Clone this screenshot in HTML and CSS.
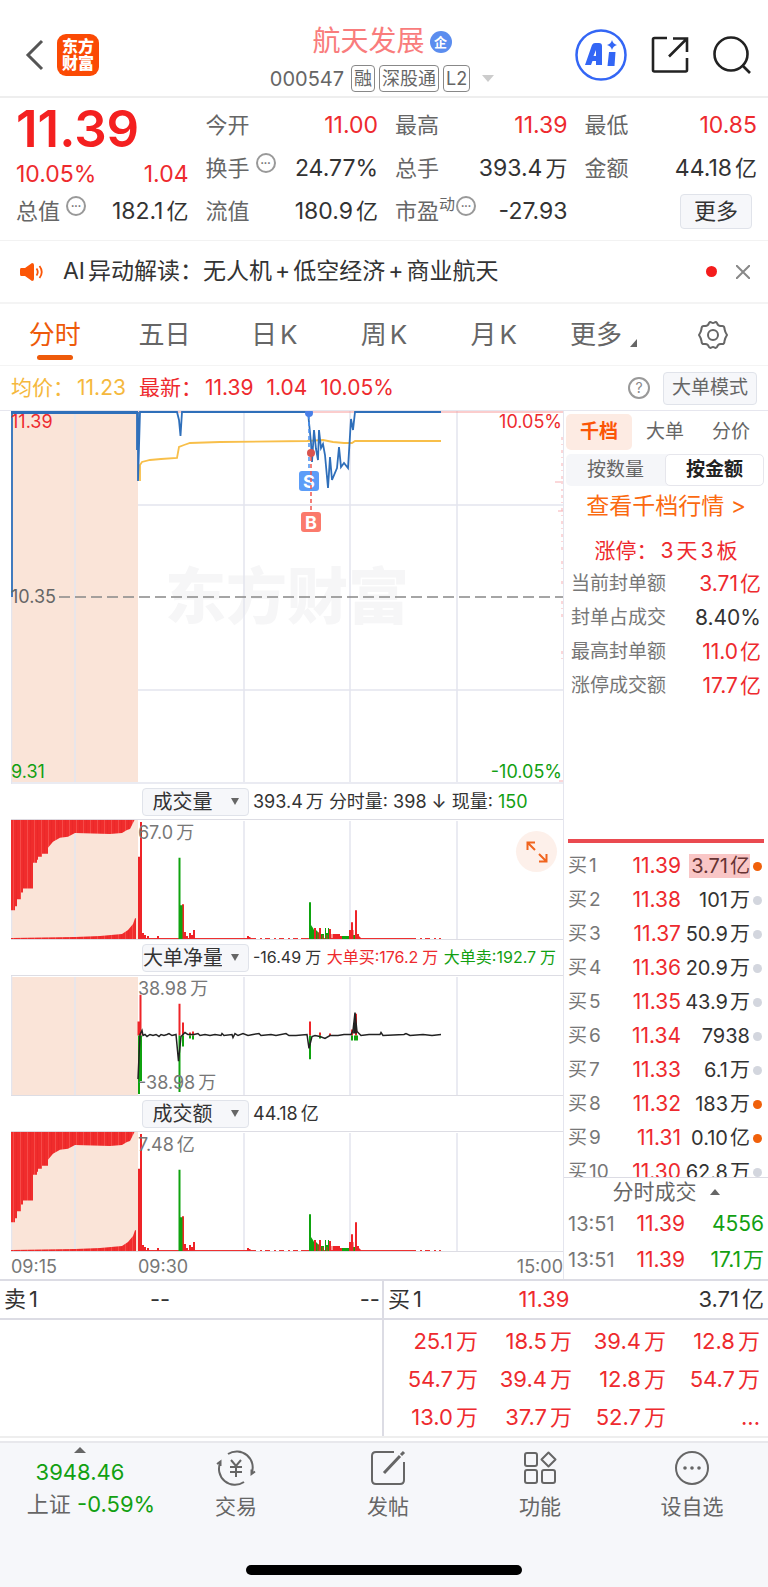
FILE: index.html
```html
<!DOCTYPE html>
<html lang="zh-CN">
<head>
    <meta charset="UTF-8">
    <meta name="viewport" content="width=device-width, initial-scale=1.0">
    <title>航天发展 000547</title>
    <link rel="stylesheet" href="styles.css">
</head>
<body>
    <header class="topbar">
        <div class="topbar-left">
            <button class="icon-btn" aria-label="返回">
                <svg width="20" height="32" viewBox="0 0 20 32"><path d="M17 2 L3 16 L17 30" fill="none" stroke="#555" stroke-width="3"/></svg>
            </button>
            <div class="logo"><span>东方</span><span>财富</span></div>
        </div>
        <div class="topbar-title">
            <h1>航天发展<span class="corp">企</span></h1>
            <div class="code-row">
                <span class="code">000547</span>
                <span class="tag">融</span>
                <span class="tag">深股通</span>
                <span class="tag">L2</span>
                <svg class="code-arrow" width="12" height="7" viewBox="0 0 12 7"><path d="M0 0H12L6 7Z" fill="#ccc"/></svg>
            </div>
        </div>
        <div class="topbar-right">
            <button class="icon-btn" aria-label="Ai">
                <svg width="52" height="52" viewBox="0 0 52 52">
                    <circle cx="26" cy="26" r="24.5" fill="none" stroke="#3366f5" stroke-width="2.5"/>
                    <path d="M10 36L17 16Q18 14 20 14H24Q27 14 27 17V36H21V32H17.500L16 36ZM18.500 27H21V21Z" fill="#3366f5" fill-rule="evenodd"/>
                    <path d="M34 23H40.500L39.500 37H32.500ZM37 11Q38 15 42 16Q38 17 37 21Q36 17 32 16Q36 15 37 11Z" fill="#3366f5"/>
                </svg>
            </button>
            <button class="icon-btn" aria-label="分享">
                <svg width="38" height="38" viewBox="0 0 38 38" fill="none" stroke="#222" stroke-width="2.6">
                    <path d="M16 2H3.500Q2 2 2 3.500V34Q2 35.500 3.500 35.500H34.500Q36 35.500 36 34V22"/>
                    <path d="M22 2.500H36V16M36 2.500L18 20.500"/>
                </svg>
            </button>
            <button class="icon-btn" aria-label="搜索">
                <svg width="38" height="38" viewBox="0 0 38 38" fill="none" stroke="#222" stroke-width="2.6"><circle cx="18" cy="18" r="16.500"/><path d="M29 29L37 37"/></svg>
            </button>
        </div>
    </header>

    <section class="quote">
        <div class="price-cell">
            <strong class="price">11.39</strong>
            <div class="cell up"><b>10.05%</b><b>1.04</b></div>
        </div>
        <div class="cell"><span>今开</span><b class="up">11.00</b></div>
        <div class="cell"><span>最高</span><b class="up">11.39</b></div>
        <div class="cell"><span>最低</span><b class="up">10.85</b></div>
        <div class="cell"><span>换手<i class="dots">•••</i></span><b>24.77%</b></div>
        <div class="cell"><span>总手</span><b>393.4<em>万</em></b></div>
        <div class="cell"><span>金额</span><b>44.18<em>亿</em></b></div>
        <div class="cell"><span>总值<i class="dots">•••</i></span><b>182.1<em>亿</em></b></div>
        <div class="cell"><span>流值</span><b>180.9<em>亿</em></b></div>
        <div class="cell"><span>市盈<sup>动</sup><i class="dots near">•••</i></span><b>-27.93</b></div>
        <div class="cell end"><button class="more-btn">更多</button></div>
    </section>

    <section class="notice">
        <svg width="24" height="20" viewBox="0 0 24 20">
            <path d="M1 6Q0 6 0 8V12Q0 14 1 14H5L12 19Q14 19 14 17V3Q14 1 12 1L5 6Z" fill="#fb5607"/>
            <path d="M16.500 6.500Q19 10 16.500 13.500M19.500 4Q24 10 19.500 16" fill="none" stroke="#fb5607" stroke-width="1.8"/>
        </svg>
        <p>AI<em>异动解读：无人机</em><em>+</em><em>低空经济</em><em>+</em><em>商业航天</em></p>
        <span class="red-dot"></span>
        <button class="icon-btn" aria-label="关闭">
            <svg width="14" height="14" viewBox="0 0 14 14"><path d="M0 0L14 14M14 0L0 14" stroke="#888" stroke-width="2"/></svg>
        </button>
    </section>

    <nav class="tabs">
        <a href="#" class="active">分时</a>
        <a href="#">五日</a>
        <a href="#">日<em>K</em></a>
        <a href="#">周<em>K</em></a>
        <a href="#">月<em>K</em></a>
        <a href="#">更多<svg class="corner" width="7" height="8" viewBox="0 0 7 8"><path d="M7 0V8H0Z" fill="#666"/></svg></a>
        <button class="icon-btn" aria-label="设置">
            <svg width="30" height="30" viewBox="0 0 30 30" fill="none" stroke="#666" stroke-width="2">
                <path d="M11 3Q12 1.500 13.500 2.500Q15 3.500 16.500 2.500Q18 1.500 19 3Q20 6.500 23.500 6Q26.500 5.500 26.500 9Q27 12 29 15Q27 18 26.500 21Q26.500 24.500 23.500 24Q20 23.500 19 27Q18 28.500 16.500 27.500Q15 26.500 13.500 27.500Q12 28.500 11 27Q10 23.500 6.500 24Q3.500 24.500 3.500 21Q3 18 1 15Q3 12 3.500 9Q3.500 5.500 6.500 6Q10 6.500 11 3Z"/>
                <circle cx="15" cy="15" r="5"/>
            </svg>
        </button>
    </nav>

    <div class="legend">
        <span class="avg">均价：<em>11.23</em></span>
        <span class="up">最新：<em>11.39</em></span>
        <span class="up">1.04</span>
        <span class="up">10.05%</span>
        <button class="help" aria-label="帮助">?</button>
        <button class="mode-btn">大单模式</button>
    </div>

    <main class="board">
        <div class="charts">
            <div class="chart chart-price">
                <div class="watermark">东方财富</div>
                <svg viewBox="0 0 552 373" preserveAspectRatio="none">
                    <rect x="0" y="1" width="127" height="370" fill="#fae4d8"/>
                    <path d="M.5 0V373M64 0V371M233 0V371M339 0V371M446 0V371" stroke="#e4e5ee" stroke-width="1.500" fill="none"/>
                    <path d="M127 94H552M127 279H552M0 372H552" stroke="#e4e5ee" stroke-width="1.500" fill="none"/>
                    <path d="M48 186H552" stroke="#888" stroke-width="1.500" stroke-dasharray="11 5"/>
                    <path d="M0 1H552" stroke="#f79a9a" stroke-width="1"/>
                    <path d="M551 26V80M551 84V140M551 150V160M551 170V176M551 190V210M551 240V250" stroke="#f7b0b4" stroke-dasharray="3 4 1 5"/>
                    <path d="M544 71H552M547 100H552M548 370H552" stroke="#f7b0b4"/>
                    <path d="M129 70L129 54L131 51L139 49L150 48L166 47L168 36L173 34L179 32L209 31L296 30L312 29L322 31L333 32L341 32L344 30H430" fill="none" stroke="#f8bf4a" stroke-width="1.800"/>
                    <path d="M0 1.500H127" stroke="#2f6fba" stroke-width="3"/>
                    <path d="M1 186V1M126 1V39" stroke="#2f6fba" stroke-width="1.800" fill="none"/>
                    <path d="M127 1V70L129 1H166L168 9L169.500 25L171 1H297L300 32L301 51L303 19L305 38L307 49L308 19L310 37L312 33L314 44L317 77L319 46L321 69L326 57L328 36L330 56L333 52L337 57L340 8L342 19L344 1H430" fill="none" stroke="#2f6fba" stroke-width="1.800"/>
                    <path d="M298 4V60" stroke="#4a90f0" stroke-width="1.500" stroke-dasharray="4 3"/>
                    <circle cx="298" cy="2" r="4" fill="#4a80e8"/>
                    <rect x="288" y="60" width="20" height="20" rx="3" fill="#5c9df8"/>
                    <text x="298" y="77" class="mark">S</text>
                    <path d="M300 46V101" stroke="#f0554e" stroke-width="1.500" stroke-dasharray="4 3"/>
                    <circle cx="300" cy="42" r="4" fill="#d9534f"/>
                    <rect x="290" y="101" width="20" height="20" rx="3" fill="#fb7a6c"/>
                    <text x="300" y="118" class="mark">B</text>
                </svg>
                <span class="tl up">11.39</span>
                <span class="tr up">10.05%</span>
                <span class="ml">10.35</span>
                <span class="bl down">9.31</span>
                <span class="br down">-10.05%</span>
            </div>

            <div class="sub-head">
                <div class="picker"><select aria-label="指标一"><option>成交量</option></select><i></i></div>
                <p>393.4<em>万</em> 分时量: 398 ↓ 现量: <b class="down">150</b></p>
            </div>
            <div class="chart chart-sub">
                <svg viewBox="0 0 552 121" preserveAspectRatio="none">
                    <defs>
                        <pattern id="stripe" width="7" height="10" patternUnits="userSpaceOnUse">
                            <rect width="7" height="10" fill="#f02c2c"/>
                            <rect x="2" width="1" height="10" fill="#f64a48"/>
                            <rect x="5" width="1" height="10" fill="#ea282a"/>
                        </pattern>
                        <g id="volume">
                            <rect x="0" y="0" width="127" height="121" fill="#fae4d8"/>
                            <path d="M.5 0V121M64 0V121M233 2V121M339 2V121M446 2V121" stroke="#e4e5ee" stroke-width="1.500" fill="none"/>
                            <path d="M0 0V92H4V88H6V81H10V74H12V70H22V44H26V41H27V38H31V35H37V29L42 23L49 19L57 18L64 14L99 15L111 14L116 11L119 10L122 4L124 0Z" fill="url(#stripe)"/>
                            <path d="M0 121V120L64 119L89 118L111 116L117 112L122 106L124 100H125V121Z" fill="url(#stripe)"/>
                            <path d="M127 120.500H240M290 120.500H400" stroke="#ee2f2f" stroke-width="1"/>
                            <path d="M240 120.500H290M400 120.500H430" stroke="#ee2f2f" stroke-width="1" stroke-dasharray="5 4 2 3"/>
                            <path d="M128 121V38M130 121V3M132 121V115M134 121V117M137 121V118M147 121V118M172 121V86M174 121V114M176 121V118M179 121V115M181 121V117M183 121V112M237 121V118M238.500 121V119M304 121V110M309 121V110M319 121V111M339 121V112M341 121V104M345 121V92M347 121V116" stroke="#ee2428" stroke-width="2" fill="none"/>
                            <path d="M322 121V116H329V118H331V121ZM346 121V116L350 120V121Z" fill="#ee2428"/>
                            <path d="M168.500 121V39M170.500 121V87M299 121V84" stroke="#0fa30f" stroke-width="2" fill="none"/>
                            <path d="M300 121V107L302 110L303 112V121ZM305 121V112L308 115V121ZM310 121V116H313V121ZM314 121V110H315V115H317V110H318V121ZM331 121V118H338V121ZM342 121V117H344V121Z" fill="#0fa30f"/>
                            <path d="M307 121V114M312 121V117M316 121V117M321 121V116M326 121V117M342 121V112" stroke="#ee2428" stroke-width="1"/>
                            <path d="M0 .5H552" stroke="#dddde4"/>
                        </g>
                    </defs>
                    <use href="#volume"/>
                </svg>
                <span class="in">67.0<em>万</em></span>
                <button class="expand" aria-label="展开">
                    <svg width="22" height="22" viewBox="0 0 22 22" fill="none" stroke="#f0641e" stroke-width="2"><path d="M1.500 9V1.500H9M1.500 1.500L9 9M20.500 13V20.500H13M20.500 20.500L13 13"/></svg>
                </button>
            </div>

            <div class="sub-head">
                <div class="picker"><select aria-label="指标二"><option>大单净量</option></select><i></i></div>
                <p class="small">-16.49<em>万</em> <span class="up">大单买:176.2<em>万</em></span> <span class="down">大单卖:192.7<em>万</em></span></p>
            </div>
            <div class="chart chart-sub">
                <svg viewBox="0 0 552 121" preserveAspectRatio="none">
                    <rect x="0" y="2" width="127" height="119" fill="#fae4d8"/>
                    <path d="M.5 0V121M64 2V121M233 2V121M339 2V121M446 2V121" stroke="#e4e5ee" stroke-width="1.500" fill="none"/>
                    <path d="M0 .5H552" stroke="#dddde4"/>
                    <path d="M127.500 61V47M129.500 61V20M168.500 61V29M172 61V48M179 61V58M182 61V57M299 61V47M309 61V58M319 61V59M341 61V55M345 61V39" stroke="#ee2428" stroke-width="2"/>
                    <path d="M128 61V120M130 61V107M168.500 61V118M172 61V72M179 61V64M182 61V65M299 61V85M309 61V64M341 61V66M344 61V66M346 61V66" stroke="#0fa30f" stroke-width="2"/>
                    <path d="M127 105L129 60L131 56L132 61L134 60L136 62L139 60L142 61L145 60L148 62L150 60L153 61L156 60L158 59L161 61L165 60L167.500 87L170 62L174 58L177 60L183 60L187 59L189 61L194 60L199 61L204 60L210 61L211 59L213 61L221 60L222 63L224 59L227 61L232 59L237 61L242 60L248 59L250 61L260 60L265 61L275 59L278 61L285 61L296 60L298 74L301 62L304 61L309 62L314 64L319 61L327 61L333 60L340 60L342 56L344 38L346 57L350 61L358 60L369 60L370 58L372 61L393 60L395 59L399 61L412 60L421 61L430 60" fill="none" stroke="#222" stroke-width="1.500"/>
                    <path d="M342 59L344 38L346 59Z" fill="#222"/>
                </svg>
                <span class="in">38.98<em>万</em></span>
                <span class="in low">-38.98<em>万</em></span>
            </div>

            <div class="sub-head">
                <div class="picker"><select aria-label="指标三"><option>成交额</option></select><i></i></div>
                <p>44.18<em>亿</em></p>
            </div>
            <div class="chart chart-sub">
                <svg viewBox="0 0 552 121" preserveAspectRatio="none"><use href="#volume"/></svg>
                <span class="in">7.48<em>亿</em></span>
            </div>
            <div class="axis"><span>09:15</span><span class="open">09:30</span><span>15:00</span></div>
        </div>

        <aside class="side">
            <div class="side-tabs">
                <button class="active">千档</button>
                <button>大单</button>
                <button>分价</button>
            </div>
            <div class="segment">
                <button>按数量</button>
                <button class="active">按金额</button>
            </div>
            <a href="#" class="depth-link">查看千档行情 &gt;</a>
            <h2 class="up">涨停：<em>3</em><em>天</em><em>3</em><em>板</em></h2>
            <table class="limit">
                <tr><th>当前封单额</th><td class="up">3.71<em>亿</em></td></tr>
                <tr><th>封单占成交</th><td>8.40%</td></tr>
                <tr><th>最高封单额</th><td class="up">11.0<em>亿</em></td></tr>
                <tr><th>涨停成交额</th><td class="up">17.7<em>亿</em></td></tr>
            </table>
            <div class="bids">
                <table>
                    <tr class="hot"><th>买<em>1</em></th><td class="up">11.39</td><td><mark>3.71<em>亿</em></mark></td><td><i></i></td></tr>
                    <tr><th>买<em>2</em></th><td class="up">11.38</td><td>101<em>万</em></td><td><i></i></td></tr>
                    <tr><th>买<em>3</em></th><td class="up">11.37</td><td>50.9<em>万</em></td><td><i></i></td></tr>
                    <tr><th>买<em>4</em></th><td class="up">11.36</td><td>20.9<em>万</em></td><td><i></i></td></tr>
                    <tr><th>买<em>5</em></th><td class="up">11.35</td><td>43.9<em>万</em></td><td><i></i></td></tr>
                    <tr><th>买<em>6</em></th><td class="up">11.34</td><td>7938</td><td><i></i></td></tr>
                    <tr><th>买<em>7</em></th><td class="up">11.33</td><td>6.1<em>万</em></td><td><i></i></td></tr>
                    <tr class="hot"><th>买<em>8</em></th><td class="up">11.32</td><td>183<em>万</em></td><td><i></i></td></tr>
                    <tr class="hot"><th>买<em>9</em></th><td class="up">11.31</td><td>0.10<em>亿</em></td><td><i></i></td></tr>
                    <tr><th>买<em>10</em></th><td class="up">11.30</td><td>62.8<em>万</em></td><td><i></i></td></tr>
                </table>
            </div>
            <button class="trades-head">分时成交<svg width="10" height="6" viewBox="0 0 10 6"><path d="M5 0L10 6H0Z" fill="#666"/></svg></button>
            <table class="trades">
                <tr><th>13:51</th><td class="up">11.39</td><td class="down">4556</td></tr>
                <tr><th>13:51</th><td class="up">11.39</td><td class="down">17.1<em>万</em></td></tr>
            </table>
        </aside>
    </main>

    <section class="queue">
        <div class="queue-half">
            <div class="queue-head"><span>卖<em>1</em></span><span>--</span><span>--</span></div>
        </div>
        <div class="queue-half">
            <div class="queue-head"><span>买<em>1</em></span><span class="up">11.39</span><span>3.71<em>亿</em></span></div>
            <div class="queue-grid up">
                <span>25.1<em>万</em></span><span>18.5<em>万</em></span><span>39.4<em>万</em></span><span>12.8<em>万</em></span>
                <span>54.7<em>万</em></span><span>39.4<em>万</em></span><span>12.8<em>万</em></span><span>54.7<em>万</em></span>
                <span>13.0<em>万</em></span><span>37.7<em>万</em></span><span>52.7<em>万</em></span><span>...</span>
            </div>
        </div>
    </section>

    <footer>
        <nav class="bottom-nav">
            <a href="#" class="index">
                <svg width="12" height="6" viewBox="0 0 12 6"><path d="M6 0L12 6H0Z" fill="#666"/></svg>
                <span>3948.46</span>
                <span class="index-change"><b>上证</b> -0.59%</span>
            </a>
            <a href="#">
                <svg width="40" height="36" viewBox="0 0 40 36" fill="none" stroke="#666" stroke-width="2">
                    <path d="M12 4A16 16 0 0 1 35.500 23.500M28 32A16 16 0 0 1 4.500 12M1 14L4.500 11.500V16M39 21.500L35.500 24V19.500"/>
                    <path d="M15 10L20 16L25 10M20 16V27M14 17H26M14 22H26"/>
                </svg>
                交易
            </a>
            <a href="#">
                <svg width="36" height="36" viewBox="0 0 36 36" fill="none" stroke="#666" stroke-width="2">
                    <path d="M24 2H6Q2 2 2 6V30Q2 34 6 34H30Q34 34 34 30V12"/>
                    <path d="M14 23L30 6M31 5L34 2" stroke-width="3"/>
                </svg>
                发帖
            </a>
            <a href="#">
                <svg width="36" height="36" viewBox="0 0 36 36" fill="none" stroke="#666" stroke-width="2">
                    <rect x="3" y="3" width="12" height="13" rx="2"/><rect x="3" y="20" width="12" height="13" rx="2"/><rect x="20" y="20" width="13" height="13" rx="2"/><path d="M26.500 2.500L33.500 9.500L26.500 16.500L19.500 9.500Z" stroke-linejoin="round"/>
                </svg>
                功能
            </a>
            <a href="#">
                <svg width="36" height="36" viewBox="0 0 36 36" fill="none" stroke="#666" stroke-width="2"><circle cx="18" cy="18" r="16"/><g fill="#666" stroke="none"><circle cx="11" cy="18" r="1.800"/><circle cx="18" cy="18" r="1.800"/><circle cx="25" cy="18" r="1.800"/></g></svg>
                设自选
            </a>
        </nav>
        <div class="home-bar"></div>
    </footer>
</body>
</html>
```

FILE: styles.css
```css
* {
    box-sizing: border-box;
}

body {
    margin: 0;
    background: #fff;
    color: #333;
    font-family: Inter, "Noto Sans CJK SC", sans-serif;
    font-size: 22px;
    line-height: 1.2;
}

h1, h2, p {
    margin: 0;
    font-weight: 400;
}

button, select {
    font: inherit;
    color: inherit;
    border: none;
    background: none;
    padding: 0;
    margin: 0;
}

a {
    color: inherit;
    text-decoration: none;
}

svg {
    display: block;
    flex: none;
}

b, i, em, th {
    font-weight: 400;
    font-style: normal;
}

table {
    border-collapse: collapse;
    width: 100%;
}

th, td {
    padding: 0;
    text-align: left;
    white-space: nowrap;
}

em {
    margin-left: 3px;
}

.up {
    color: #ee2a2e;
}

.down {
    color: #12a012;
}

/* top bar */
.topbar {
    display: grid;
    grid-template-columns: 1fr auto 1fr;
    height: 98px;
    padding: 14px 17px 0 13px;
    border-bottom: 2px solid #eee;
}

.topbar-left, .topbar-right {
    display: flex;
    align-items: center;
}

.topbar-left {
    gap: 12px;
    padding-left: 12px;
}

.topbar-right {
    justify-content: flex-end;
    gap: 24px;
}

.logo {
    display: flex;
    flex-direction: column;
    justify-content: center;
    align-items: center;
    width: 42px;
    height: 42px;
    border-radius: 9px;
    background: #fb4a04;
    color: #fff;
    font-size: 16px;
    font-weight: 900;
    line-height: 17px;
}

.topbar-title {
    display: flex;
    flex-direction: column;
    align-items: center;
    padding-top: 11px;
}

.topbar-title h1 {
    display: flex;
    align-items: center;
    gap: 5px;
    height: 34px;
    font-size: 28px;
    color: #f97c7c;
}

.corp {
    width: 22px;
    height: 22px;
    border-radius: 50%;
    background: #5b8def;
    color: #fff;
    font-size: 13px;
    font-weight: 700;
    line-height: 22px;
    text-align: center;
}

.code-row {
    display: flex;
    align-items: center;
    gap: 4px;
    margin-top: 6px;
    color: #666;
    font-size: 20px;
}

.code {
    margin-right: 3px;
}

.tag {
    height: 27px;
    padding: 0 2px;
    border: 1px solid #888;
    border-radius: 4px;
    font-size: 18px;
    line-height: 25px;
}

.code-arrow {
    margin-left: 8px;
}

/* quote */
.quote {
    display: grid;
    grid-template-columns: repeat(4, 1fr);
    grid-auto-rows: 43px;
    column-gap: 17px;
    height: 143px;
    padding: 6px 11px 0 16px;
    border-bottom: 1px solid #f2f2f2;
}

.price-cell {
    grid-row: span 2;
}

.price {
    display: block;
    height: 49px;
    color: #f42020;
    font-size: 51px;
    font-weight: 600;
    line-height: 50px;
}

.cell {
    display: flex;
    justify-content: space-between;
    align-items: center;
}

.cell span {
    display: flex;
    color: #666;
}

.cell b {
    font-size: 23px;
}

.cell em {
    font-size: 22px;
}

.price-cell .cell {
    height: 43px;
}

.cell sup {
    margin-top: -4px;
    font-size: 16px;
    line-height: 20px;
}

.cell.end {
    justify-content: flex-end;
    padding-right: 5px;
}

.dots {
    width: 20px;
    height: 20px;
    margin: -2px 0 0 6px;
    border: 2px solid #999;
    border-radius: 50%;
    font-size: 6px;
    line-height: 16px;
    text-align: center;
}

.dots.near {
    margin-left: 1px;
}

.more-btn {
    width: 72px;
    height: 35px;
    border: 1px solid #e0e3ea;
    border-radius: 4px;
    background: #f6f7fa;
}

/* notice */
.notice {
    display: flex;
    align-items: center;
    height: 63px;
    padding: 0 18px 0 20px;
    border-bottom: 2px solid #f4f4f4;
    font-size: 23px;
}

.notice p {
    flex: 1;
    margin-left: 19px;
}

.red-dot {
    width: 11px;
    height: 11px;
    margin-right: 19px;
    border-radius: 50%;
    background: #f41c1c;
}

/* tabs */
.tabs {
    display: grid;
    grid-template-columns: repeat(7, 1fr);
    height: 62px;
    border-bottom: 1px solid #f4f4f4;
    color: #666;
    font-size: 26px;
}

.tabs a {
    position: relative;
    display: flex;
    justify-content: center;
    align-items: center;
}

.tabs .active {
    color: #ee5a0a;
}

.tabs .active::after {
    content: "";
    position: absolute;
    bottom: 5px;
    width: 36px;
    height: 5px;
    border-radius: 3px;
    background: #ee5a0a;
}

.corner {
    margin: 16px 0 0 8px;
}

.tabs .icon-btn {
    display: flex;
    justify-content: center;
    align-items: center;
}

/* legend */
.legend {
    display: flex;
    align-items: center;
    gap: 13px;
    height: 44px;
    padding: 0 11px;
    font-size: 21px;
}

.avg {
    color: #f5b83d;
}

.help {
    width: 22px;
    height: 22px;
    margin-left: auto;
    border: 2px solid #999;
    border-radius: 50%;
    color: #888;
    font-size: 14px;
    line-height: 16px;
}

.mode-btn {
    width: 94px;
    height: 33px;
    border: 1px solid #e0e3ea;
    border-radius: 4px;
    background: #f6f7fa;
    color: #666;
    font-size: 19px;
}

/* charts */
.board {
    display: grid;
    grid-template-columns: minmax(0, 1fr) 204px;
    border-top: 1px solid #e6e6ee;
    border-bottom: 2px solid #dcdce4;
}

.charts {
    padding-left: 11px;
    border-right: 1px solid #e4e5ee;
}

.chart {
    position: relative;
}

.chart svg {
    width: 100%;
    height: 100%;
}

.chart span {
    position: absolute;
    font-size: 18px;
    line-height: 20px;
}

.chart-price {
    height: 373px;
}

.chart-sub {
    height: 121px;
    border-bottom: 1px solid #dddde4;
}

.watermark {
    position: absolute;
    top: 150px;
    left: 0;
    right: 0;
    color: #f6f6f7;
    font-size: 61px;
    font-weight: 900;
    line-height: 72px;
    text-align: center;
}

.chart-price svg {
    position: relative;
}

.mark {
    fill: #fff;
    font-size: 18px;
    font-weight: 700;
    text-anchor: middle;
}

.chart .tl {
    top: 1px;
    left: 0;
}

.chart .tr {
    top: 1px;
    right: 1px;
}

.chart .ml {
    top: 176px;
    left: 0;
    color: #666;
}

.chart .bl {
    bottom: 2px;
    left: 0;
}

.chart .br {
    bottom: 2px;
    right: 1px;
}

.chart .in {
    top: 4px;
    left: 23%;
    color: #777;
}

.chart .low {
    top: auto;
    bottom: 2px;
}

.expand {
    position: absolute;
    top: 12px;
    right: 6px;
    display: flex;
    justify-content: center;
    align-items: center;
    width: 41px;
    height: 41px;
    border-radius: 50%;
    background: #fdf0ea;
}

.chart .expand svg {
    width: 22px;
    height: 22px;
}

.sub-head {
    display: flex;
    align-items: center;
    gap: 4px;
    height: 35px;
    padding-left: 131px;
    font-size: 18px;
    white-space: nowrap;
}

.sub-head .small {
    font-size: 16px;
}

.sub-head .small em {
    margin: 0 1px 0 4px;
}

.picker {
    position: relative;
}

.picker select {
    display: block;
    appearance: none;
    width: 107px;
    height: 28px;
    padding-right: 26px;
    border: 1px solid #e0e3ea;
    border-radius: 4px;
    background: #f6f7fa;
    font-size: 20px;
    text-align: center;
}

.picker i {
    position: absolute;
    top: 10px;
    right: 10px;
    border: 4px solid transparent;
    border-top: 7px solid #666;
    border-bottom: 0;
}

.axis {
    display: flex;
    height: 27px;
    color: #777;
    font-size: 18px;
    line-height: 29px;
}

.axis .open {
    flex: 1;
}

.axis span:first-child {
    width: 23%;
}

/* side panel */
.side {
    display: flex;
    flex-direction: column;
    padding: 3px 4px 0;
    font-size: 21px;
}

.side-tabs, .segment {
    display: grid;
    margin: 0 0 0 -2px;
    color: #666;
    font-size: 19px;
}

.side-tabs {
    grid-template-columns: repeat(3, 1fr);
    height: 36px;
}

.side-tabs button, .segment button {
    border-radius: 5px;
}

.side-tabs .active {
    background: #fdebe3;
    color: #fb5607;
    font-weight: 600;
}

.segment {
    grid-template-columns: 1fr 1fr;
    height: 32px;
    margin-top: 4px;
    border-radius: 5px;
    background: #f5f6f9;
}

.segment .active {
    border: 1px solid #e6e6ec;
    background: #fff;
    color: #222;
    font-weight: 600;
}

.depth-link {
    height: 40px;
    color: #fb6a10;
    font-size: 23px;
    line-height: 40px;
    text-align: center;
}

.side h2 {
    height: 39px;
    margin-top: 5px;
    font-size: 21px;
    line-height: 39px;
    text-align: center;
}

.limit {
    width: auto;
    margin: -3px 3px 0;
}

.side tr {
    height: 34px;
}

.side th {
    color: #777;
    font-size: 19px;
}

.side td {
    text-align: right;
}

.bids {
    height: 338px;
    margin-top: 136px;
    padding-top: 6px;
    border-top: 4px solid #ea4a50;
    overflow: hidden;
}

.bids table, .trades {
    table-layout: fixed;
}

.bids th {
    width: 48px;
}

.bids td:nth-child(2) {
    width: 65px;
}

.bids td:nth-child(4) {
    width: 14px;
}

.bids td:nth-child(3) {
    font-size: 20px;
}

.bids i {
    width: 9px;
    height: 9px;
    display: block;
    margin-left: 3px;
    border-radius: 50%;
    background: #d3d6de;
}

.bids .hot i {
    background: #f0600a;
}

.bids em, .limit em, .trades em {
    margin-left: 2px;
}

.bids mark {
    padding-left: 2px;
    background: #f9c6c6;
    color: #633;
}

.trades-head {
    display: flex;
    justify-content: center;
    align-items: center;
    gap: 13px;
    height: 29px;
    margin: 0 -4px;
    border-top: 1px solid #dcdce4;
    color: #666;
    font-size: 21px;
}

.side .trades tr {
    height: 36px;
}

.side .trades th {
    width: 52px;
    font-size: 20px;
}

.trades td:nth-child(2) {
    width: 65px;
}

/* order queue */
.queue {
    display: grid;
    grid-template-columns: 1fr 1fr;
    border-bottom: 2px solid #eee;
}

.queue-half + .queue-half {
    margin-left: -2px;
    border-left: 2px solid #dcdce4;
}

.queue-head {
    display: grid;
    grid-template-columns: 33% 17% 1fr;
    align-items: center;
    height: 39px;
    padding: 0 4px;
    border-bottom: 2px solid #dcdce4;
}

.queue-head span:nth-child(2) {
    text-align: center;
}

.queue-head span:last-child {
    text-align: right;
}

.queue-grid {
    display: grid;
    grid-template-columns: repeat(4, 1fr);
    grid-auto-rows: 38px;
    align-items: center;
    padding: 2px 8px 0 0;
    text-align: right;
}

/* bottom bar */
footer {
    margin-top: 3px;
    padding: 3px 0 15px;
    border-top: 2px solid #e8e8ec;
    background: #f6f7fa;
}

.bottom-nav {
    display: flex;
    height: 119px;
}

.bottom-nav a {
    flex: 1;
    display: flex;
    flex-direction: column;
    align-items: center;
    gap: 8px;
    padding-top: 4px;
    color: #666;
    font-size: 21px;
}

.bottom-nav .index {
    flex: none;
    width: 160px;
    padding-top: 1px;
    color: #12a012;
    gap: 6px;
    font-size: 22px;
}

.index-change {
    padding-left: 22px;
    white-space: nowrap;
}

.index b {
    color: #666;
}

.home-bar {
    width: 36%;
    height: 10px;
    margin: 0 auto;
    border-radius: 5px;
    background: #000;
}
```
